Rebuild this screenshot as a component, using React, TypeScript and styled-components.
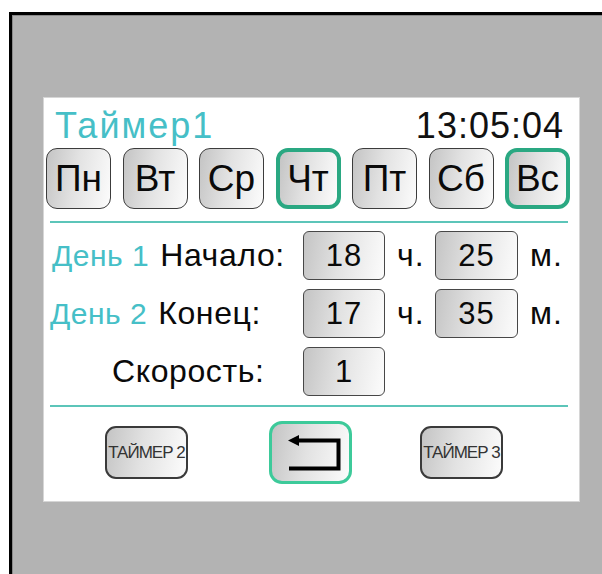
import { FC } from 'react'
import styled, { createGlobalStyle, css } from 'styled-components'

const TEAL = '#46bfc7'
const LINE = '#5cc5b9'
const ACTIVE = '#2aa882'

const GlobalStyle = createGlobalStyle`
  html, body {
    margin: 0;
    padding: 0;
    background: #ffffff;
    overflow: hidden;
  }
  body {
    font-family: 'Liberation Sans', Arial, sans-serif;
  }
`

const Frame = styled.div`
  margin: 12px 0 0 9px;
  height: calc(100vh - 12px);
  box-sizing: border-box;
  border-top: 3px solid #000000;
  border-left: 3px solid #000000;
  background: #b3b3b3;
  box-shadow: inset 1px 1px 0 #8a8a8a;
  padding: 83px 0 0 32px;
`

const Panel = styled.div`
  width: 535px;
  height: 403px;
  box-sizing: border-box;
  background: #ffffff;
  box-shadow: 0 0 0 1px #d6d6d6;
  display: flex;
  flex-direction: column;
`

const Header = styled.div`
  display: flex;
  justify-content: space-between;
  align-items: baseline;
  padding: 10px 15px 0 11px;
  font-size: 36px;
  line-height: 36px;
`

const Title = styled.span`
  color: ${TEAL};
  letter-spacing: 2px;
`

const Clock = styled.span`
  color: #111111;
  letter-spacing: 1px;
`

const Days = styled.div`
  display: flex;
  justify-content: space-between;
  margin-top: 4px;
  padding: 0 9px 0 2px;
`

const buttonFace = css`
  background: linear-gradient(100deg, #c4c4c4 0%, #e2e2e2 45%, #fcfcfc 100%);
`

const DayButton = styled.div<{ $active?: boolean }>`
  ${buttonFace};
  width: 65px;
  height: 61px;
  box-sizing: border-box;
  display: flex;
  align-items: center;
  justify-content: center;
  font-size: 37px;
  color: #0a0a0a;
  border-radius: 11px;
  border: 1.5px solid #3c3c3c;

  ${({ $active }) =>
    $active &&
    css`
      border: 4px solid ${ACTIVE};
      border-radius: 12px;
    `}
`

const Rule = styled.div<{ $top: number }>`
  height: 2px;
  margin: ${({ $top }) => $top}px 11px 0 6px;
  background: ${LINE};
`

const Form = styled.div`
  display: grid;
  grid-template-columns: 259px 82px 50px 83px auto;
  grid-auto-rows: 49px;
  row-gap: 9px;
  align-items: center;
  margin-top: 8px;
  font-size: 32px;
  color: #0a0a0a;
`

const Label = styled.div<{ $indent: number }>`
  padding-left: ${({ $indent }) => $indent}px;
  white-space: nowrap;
  letter-spacing: 0.6px;
`

const Day = styled.span`
  color: ${TEAL};
  font-size: 30px;
  letter-spacing: 0.5px;
  margin-right: 11px;
`

const Field = styled.div`
  ${buttonFace};
  height: 49px;
  box-sizing: border-box;
  border: 1.5px solid #474747;
  border-radius: 6px;
  display: flex;
  align-items: center;
  justify-content: center;
  font-size: 31px;
  letter-spacing: 1px;
`

const Unit = styled.div`
  padding-left: 12px;
  letter-spacing: 1px;
`

const Footer = styled.div`
  display: flex;
  align-items: center;
  margin-top: 14px;
`

const NavButton = styled.div<{ $offset: number }>`
  ${buttonFace};
  margin-left: ${({ $offset }) => $offset}px;
  width: 83px;
  height: 53px;
  box-sizing: border-box;
  border: 2px solid #3a3a3a;
  border-radius: 11px;
  display: flex;
  align-items: center;
  justify-content: center;
  font-size: 17px;
  letter-spacing: -1px;
  color: #333333;
  white-space: nowrap;
`

const BackButton = styled.div<{ $offset: number }>`
  ${buttonFace};
  margin-left: ${({ $offset }) => $offset}px;
  width: 83px;
  height: 63px;
  box-sizing: border-box;
  border: 3px solid #3dca9a;
  border-radius: 13px;
  display: flex;
  align-items: center;
  justify-content: center;
`

const days = [
  { name: 'Пн' },
  { name: 'Вт' },
  { name: 'Ср' },
  { name: 'Чт', active: true },
  { name: 'Пт' },
  { name: 'Сб' },
  { name: 'Вс', active: true },
]

// return arrow: head on the upper left, hook down the right side
const ReturnIcon: FC = () => (
  <svg width="60" height="40" viewBox="0 0 60 40">
    <path d="M17 7.5 H57.5 V35.5 H8" fill="none" stroke="#000" strokeWidth="4" />
    <polygon points="7,7.5 18,2 18,13" fill="#000" />
  </svg>
)

const App: FC = () => (
  <>
    <GlobalStyle />
    <Frame>
      <Panel>
        <Header>
          <Title>Таймер1</Title>
          <Clock>13:05:04</Clock>
        </Header>

        <Days>
          {days.map(d => (
            <DayButton key={d.name} $active={d.active}>
              {d.name}
            </DayButton>
          ))}
        </Days>

        <Rule $top={12} />

        <Form>
          <Label $indent={8}>
            <Day>День 1</Day>Начало:
          </Label>
          <Field>18</Field>
          <Unit>ч.</Unit>
          <Field>25</Field>
          <Unit>м.</Unit>

          <Label $indent={6}>
            <Day>День 2</Day>Конец:
          </Label>
          <Field>17</Field>
          <Unit>ч.</Unit>
          <Field>35</Field>
          <Unit>м.</Unit>

          <Label $indent={68}>Скорость:</Label>
          <Field>1</Field>
        </Form>

        <Rule $top={9} />

        <Footer>
          <NavButton $offset={61}>ТАЙМЕР 2</NavButton>
          <BackButton $offset={81}>
            <ReturnIcon />
          </BackButton>
          <NavButton $offset={68}>ТАЙМЕР 3</NavButton>
        </Footer>
      </Panel>
    </Frame>
  </>
)

export default App
